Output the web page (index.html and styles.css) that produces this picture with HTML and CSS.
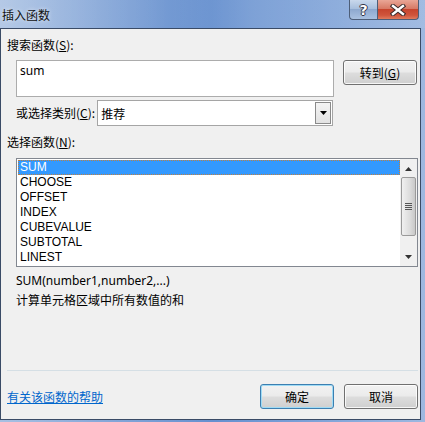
FILE: index.html
```html
<!DOCTYPE html>
<html lang="zh-CN">
<head>
  <meta charset="UTF-8" />
  <title>插入函数</title>
  <link rel="stylesheet" href="styles.css">
</head>
<body>
  <div class="frame">

    <!-- Title bar -->
    <div class="titlebar">
      <span class="title">插入函数</span>
      <div class="caption-btns">
        <div class="cap help">?</div>
        <div class="cap close">
          <svg width="16" height="12" viewBox="0 0 16 12">
            <path d="M3 2 L13 10 M13 2 L3 10" stroke="#3a2a2a" stroke-width="4.4" stroke-linecap="square"/>
            <path d="M3 2 L13 10 M13 2 L3 10" stroke="#fff" stroke-width="2.4" stroke-linecap="square"/>
          </svg>
        </div>
      </div>
    </div>

    <div class="client">
      <div class="label top-label">搜索函数(<u>S</u>):</div>

      <div class="search-row">
        <div class="search-box">sum</div>
        <button class="btn go">转到(<u>G</u>)</button>
      </div>

      <div class="cat-row">
        <span class="label">或选择类别(<u>C</u>):</span>
        <div class="select">
          <span class="select-text">推荐</span>
          <span class="drop">
            <svg width="7" height="4" viewBox="0 0 7 4"><path d="M0 0 H7 L3.5 4 Z" fill="#000"/></svg>
          </span>
        </div>
      </div>

      <div class="label list-label">选择函数(<u>N</u>):</div>

      <div class="listbox">
        <div class="items">
          <div class="item selected">SUM</div>
          <div class="item">CHOOSE</div>
          <div class="item">OFFSET</div>
          <div class="item">INDEX</div>
          <div class="item">CUBEVALUE</div>
          <div class="item">SUBTOTAL</div>
          <div class="item">LINEST</div>
        </div>
        <div class="scroll">
          <div class="sbtn">
            <svg width="7" height="4" viewBox="0 0 7 4"><path d="M0 4 H7 L3.5 0 Z" fill="#333"/></svg>
          </div>
          <div class="thumb">
            <span class="grip"></span><span class="grip"></span><span class="grip"></span><span class="grip"></span>
          </div>
          <div class="track"></div>
          <div class="sbtn">
            <svg width="7" height="4" viewBox="0 0 7 4"><path d="M0 0 H7 L3.5 4 Z" fill="#333"/></svg>
          </div>
        </div>
      </div>

      <div class="desc">
        <div class="syntax">SUM(number1,number2,...)</div>
        <div class="explain">计算单元格区域中所有数值的和</div>
      </div>

      <div class="sep"></div>

      <div class="bottom-row">
        <a class="help-link" href="#">有关该函数的帮助</a>
        <div class="actions">
          <button class="btn ok">确定</button>
          <button class="btn">取消</button>
        </div>
      </div>
    </div>

  </div>
</body>
</html>
```

FILE: styles.css
```css
* { box-sizing: border-box; }
body {
  margin: 0;
  font-family: "Noto Sans", "Noto Sans CJK SC", sans-serif;
  font-size: 12px;
  color: #000;
}

.frame {
  width: 425px;
  height: 422px;
  background: linear-gradient(90deg, #a8c0e2, #86a7d8 25%, #6690cf 50%, #7a9fd6 70%, #9db8e0 100%);
  overflow: hidden;
}

/* Title bar */
.titlebar {
  height: 28px;
  display: flex;
  justify-content: space-between;
  align-items: flex-start;
  background: linear-gradient(90deg, rgba(255,255,255,0.15), rgba(255,255,255,0) 40%, rgba(255,255,255,0.1) 60%, rgba(255,255,255,0.05));
}
.title {
  font-family: "Noto Sans CJK SC", sans-serif;
  font-size: 12px;
  line-height: 16px;
  margin: 7px 0 0 2px;
  color: #111;
  text-shadow: 0 0 4px rgba(255,255,255,0.8);
}
.caption-btns {
  display: flex;
  margin-right: 6px;
}
.cap {
  height: 20px;
  display: flex;
  align-items: center;
  justify-content: center;
  border: 1px solid #4d5e78;
  border-top: none;
}
.help {
  width: 28px;
  border-right: none;
  border-radius: 0 0 0 4px;
  background: linear-gradient(#c9d8ec, #a8bfdd 45%, #8ea9cf 50%, #a9c1e0);
  color: #fff;
  font-family: "DejaVu Sans", sans-serif;
  font-weight: bold;
  font-size: 14px;
  text-shadow: 1px 0 #334, -1px 0 #334, 0 1px #334, 0 -1px #334;
}
.close {
  width: 42px;
  border-radius: 0 0 4px 0;
  background: linear-gradient(#e9a696, #d77a66 45%, #c7452e 50%, #d0553c 80%, #e07b5e);
}

/* Client area */
.client {
  width: 421px;
  height: 392px;
  background: #f0f0f0;
  border: 1px solid #3a4b66;
}

.label {
  font-family: "Noto Sans CJK SC", sans-serif;
  line-height: 16px;
  white-space: nowrap;
}
.label u { text-decoration: underline; }
.top-label { margin: 8px 0 0 6px; }

.search-row {
  display: flex;
  align-items: flex-start;
  margin-top: 7px;
}
.search-box {
  margin-left: 15px;
  width: 318px;
  height: 37px;
  background: #fff;
  border: 1px solid #acacac;
  padding: 2px 0 0 3px;
  line-height: 16px;
}
.btn {
  font-family: "Noto Sans CJK SC", sans-serif;
  font-size: 12px;
  width: 74px;
  height: 25px;
  border: 1px solid #707070;
  border-radius: 3px;
  background: linear-gradient(#f2f2f2, #ebebeb 48%, #dddddd 52%, #cfcfcf);
  box-shadow: inset 0 0 0 1px rgba(255,255,255,0.8);
  padding: 0;
  color: #000;
}
.go { margin-left: 9px; }

.cat-row {
  display: flex;
  align-items: center;
  margin-top: 3px;
  padding-left: 15px;
}
.select {
  margin-left: 2px;
  width: 236px;
  height: 26px;
  background: #fff;
  border: 1px solid #a5a5a5;
  display: flex;
  align-items: center;
  justify-content: space-between;
}
.select-text {
  font-family: "Noto Sans CJK SC", sans-serif;
  padding-left: 3px;
}
.drop {
  width: 16px;
  height: 22px;
  margin-right: 1px;
  border: 1px solid #8a8a8a;
  background: linear-gradient(#f4f4f4, #e2e2e2);
  display: flex;
  align-items: center;
  justify-content: center;
}

.list-label { margin: 8px 0 0 6px; }

.listbox {
  display: flex;
  margin: 8px 0 0 15px;
  width: 402px;
  height: 109px;
  background: #fff;
  border: 1px solid #828790;
}
.items {
  flex: 1;
  padding: 1px 0 0 1px;
}
.item {
  height: 15px;
  line-height: 15px;
  padding-left: 2px;
  font-family: "Liberation Sans", sans-serif;
  font-size: 12px;
}
.item.selected {
  background: #3399ff;
  color: #fff;
  outline: 1px dotted #c08040;
  outline-offset: -1px;
}
.scroll {
  width: 17px;
  display: flex;
  flex-direction: column;
  background: #f0f0f0;
  padding: 1px 0;
}
.sbtn {
  height: 17px;
  display: flex;
  align-items: center;
  justify-content: center;
}
.thumb {
  height: 59px;
  margin: 0 1px;
  border: 1px solid #9a9a9a;
  border-radius: 2px;
  background: linear-gradient(90deg, #f0f0f0, #dcdcdc 60%, #c8c8c8);
  display: flex;
  flex-direction: column;
  align-items: center;
  justify-content: center;
  gap: 1px;
}
.grip {
  width: 7px;
  height: 1px;
  background: #555;
}
.track { flex: 1; }

.desc {
  margin: 4px 0 0 15px;
  line-height: 19px;
}
.explain { font-family: "Noto Sans CJK SC", sans-serif; }

.sep {
  margin: 61px 0 0 6px;
  width: 411px;
  height: 1px;
  background: #d5dfe5;
}

.bottom-row {
  display: flex;
  justify-content: space-between;
  align-items: center;
  margin-top: 13px;
  padding: 0 2px 0 6px;
}
.help-link {
  font-family: "Noto Sans CJK SC", sans-serif;
  color: #0066cc;
  text-decoration: underline;
}
.actions {
  display: flex;
  gap: 10px;
}
.ok {
  border-color: #3c7fb1;
  box-shadow: inset 0 0 0 1px #9fdbf5;
}
```
